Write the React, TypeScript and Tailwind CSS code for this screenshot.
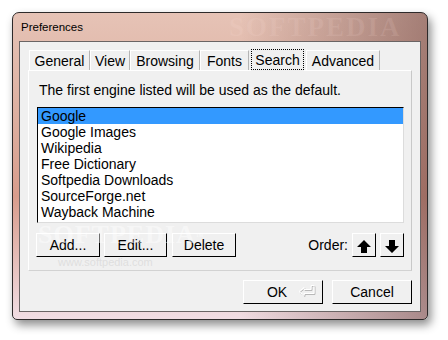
import React from "react";

const font = "font-['Liberation_Sans',Arial,sans-serif]";

function Btn({ children, className = "" }: { children: React.ReactNode; className?: string }) {
  return (
    <div
      className={`flex items-center justify-center bg-[#f0f0f0] border-t border-l border-t-white border-l-white border-r border-b border-r-black border-b-black text-[14px] leading-[16px] text-black ${className}`}
    >
      {children}
    </div>
  );
}

function Arrow({ down = false }: { down?: boolean }) {
  return (
    <svg width="14" height="13" viewBox="0 0 14 13" className={down ? "rotate-180" : ""}>
      <polygon points="7,0 14,7 10,7 10,13 4,13 4,7 0,7" fill="#000" />
    </svg>
  );
}

function Tab({ label, w, selected = false }: { label: string; w: string; selected?: boolean }) {
  if (selected) {
    return (
      <div className={`${w} h-[22px] mb-[-1px] relative z-10 bg-[#f0f0f0] flex items-center justify-center mx-[2px]`}>
        <div className="absolute inset-x-0 top-0 bottom-[1px] border border-dotted border-black" />
        <span className="text-[14px] leading-[16px]">{label}</span>
      </div>
    );
  }
  return (
    <div
      className={`${w} h-[20px] flex items-center justify-center border-t border-l border-t-white border-l-white border-r border-r-[#b4b4b4] text-[14px] leading-[16px]`}
    >
      {label}
    </div>
  );
}

export default function App() {
  const items = [
    "Google",
    "Google Images",
    "Wikipedia",
    "Free Dictionary",
    "Softpedia Downloads",
    "SourceForge.net",
    "Wayback Machine",
  ];
  return (
    <div className={`w-[448px] h-[340px] bg-white pt-[12px] pl-[12px] ${font}`}>
      <div className="w-[416px] h-[308px] rounded-t-[7px] rounded-b-[5px] border border-[#2e2a2a] shadow-[3px_5px_10px_rgba(0,0,0,0.45)] bg-[linear-gradient(to_right,transparent_55%,rgba(110,70,66,0.55)),linear-gradient(to_bottom,#e6c3b6,#dcae9f_35%,#d89c8c_60%,#f1dde3)] flex flex-col overflow-hidden">
        <div className="h-[28px] relative flex items-center pl-[8px]">
          <span className="text-[11.5px] leading-[13px] text-black">Preferences</span>
          <span className="absolute left-[216px] top-[0px] text-[27px] leading-[28px] font-['Liberation_Serif',serif] font-bold tracking-[2px] text-[rgba(255,225,220,0.12)]">
            SOFTPEDIA
          </span>
        </div>
        <div className="flex-1 px-[6px] pb-[7px]">
          <div className="h-full border border-[#6a6464] bg-[#f0f0f0] pt-[7px] px-[8px] flex flex-col relative">
            <div className="h-[21px] flex items-end pl-[1px]">
              <Tab label="General" w="w-[61px]" />
              <Tab label="View" w="w-[40px]" />
              <Tab label="Browsing" w="w-[70px]" />
              <Tab label="Fonts" w="w-[49px]" />
              <Tab label="Search" w="w-[53px]" selected />
              <Tab label="Advanced" w="w-[74px]" />
            </div>
            <div className="h-[201px] border-t border-l border-t-white border-l-white border-r border-b border-r-[#c8c8c8] border-b-[#d2d2d2] pl-[8px] pr-[7px] pt-[11px] flex flex-col">
              <div className="h-[16px] text-[14px] leading-[16px] ml-[2px] text-black">
                The first engine listed will be used as the default.
              </div>
              <div className="mt-[9px] h-[116px] bg-white border-l border-t border-l-black border-t-black border-r border-b border-r-[#dcdcdc] border-b-[#dcdcdc] flex flex-col">
                {items.map((it, i) => (
                  <div
                    key={it}
                    className={`h-[16px] text-[14px] leading-[16px] pl-[3px] text-black ${i === 0 ? "bg-[#3399ff]" : ""}`}
                  >
                    {it}
                  </div>
                ))}
              </div>
              <div className="mt-[10px] h-[24px] flex items-center -ml-px">
                <Btn className="w-[64px] h-[24px]">Add...</Btn>
                <Btn className="w-[63px] h-[24px] ml-[4px]">Edit...</Btn>
                <Btn className="w-[64px] h-[24px] ml-[5px]">Delete</Btn>
                <div className="flex-1" />
                <span className="text-[14px] leading-[16px] mr-[4px]">Order:</span>
                <Btn className="w-[24px] h-[24px]">
                  <div className="mt-[2px]"><Arrow /></div>
                </Btn>
                <Btn className="w-[24px] h-[24px] ml-[4px]">
                  <div className="mt-[2px]"><Arrow down /></div>
                </Btn>
              </div>
            </div>
            <div className="mt-[9px] flex justify-end gap-[9px]">
              <Btn className="w-[80px] h-[24px] relative">
                <span className="mr-[12px]">OK</span>
                <svg width="18" height="12" viewBox="0 0 18 12" className="absolute left-[54px] top-[4px]">
                  <path d="M7 3.5 L2 7.5 L7 11.5 L7 9.5 L17 9.5 L17 1.5 L14 1.5 L14 5.5 L7 5.5 Z" fill="none" stroke="#b8b8b8" strokeWidth="1" />
                  <path d="M6 2.5 L1 6.5 L6 10.5 L6 8.5 L16 8.5 L16 0.5 L13 0.5 L13 4.5 L6 4.5 Z" fill="none" stroke="#ffffff" strokeWidth="1" />
                </svg>
              </Btn>
              <Btn className="w-[80px] h-[24px]">Cancel</Btn>
            </div>
            <div className="absolute left-[18px] top-[180px] pointer-events-none">
              <div className="text-[26px] leading-[26px] font-['Liberation_Serif',serif] font-bold tracking-[1px] text-[rgba(255,255,255,0.45)]">
                SOFTPEDIA<sup className="text-[8px]">™</sup>
              </div>
              <div className="text-[11px] leading-[12px] ml-[20px] mt-[8px] text-[rgba(205,205,205,0.5)]">
                www.softpedia.com
              </div>
            </div>
          </div>
        </div>
      </div>
    </div>
  );
}
